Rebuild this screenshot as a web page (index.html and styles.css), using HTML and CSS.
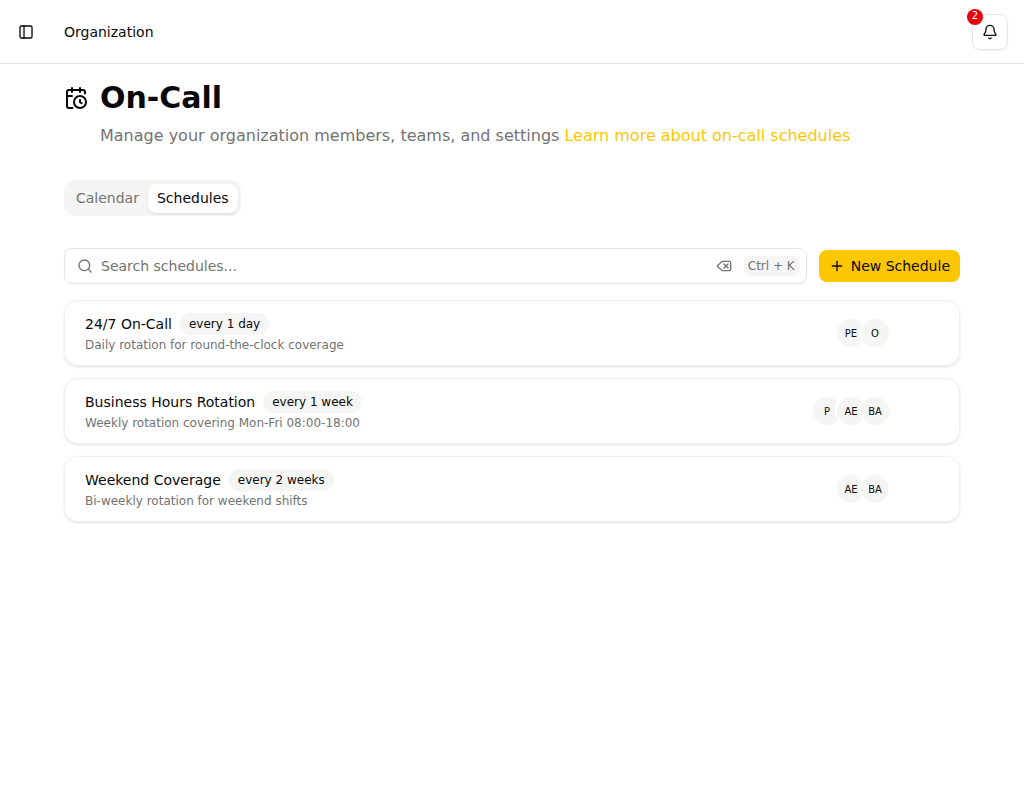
FILE: index.html
```html
<!DOCTYPE html>
<html lang="en">
<head>
    <meta charset="UTF-8">
    <meta name="viewport" content="width=device-width, initial-scale=1.0">
    <title>On-Call</title>
    <link rel="stylesheet" href="styles.css">
</head>
<body>
    <header class="topbar">
        <button type="button" class="sidebar-toggle" aria-label="Toggle sidebar">
            <svg class="icon" viewBox="0 0 24 24"><rect width="18" height="18" x="3" y="3" rx="2"/><path d="M9 3v18"/></svg>
        </button>
        <span class="breadcrumb">Organization</span>
        <button type="button" class="bell-button" aria-label="Notifications">
            <svg class="icon" viewBox="0 0 24 24"><path d="M10.268 21a2 2 0 0 0 3.464 0"/><path d="M3.262 15.326A1 1 0 0 0 4 17h16a1 1 0 0 0 .74-1.673C19.41 13.956 18 12.499 18 8A6 6 0 0 0 6 8c0 4.499-1.411 5.956-2.738 7.326"/></svg>
            <span class="bell-count">2</span>
        </button>
    </header>

    <main class="page">
        <div class="page-heading">
            <svg class="icon icon-large" viewBox="0 0 24 24"><path d="M16 14v2.2l1.6 1"/><path d="M16 2v4"/><path d="M21 7.5V6a2 2 0 0 0-2-2H5a2 2 0 0 0-2 2v14a2 2 0 0 0 2 2h3.5"/><path d="M3 10h5"/><path d="M8 2v4"/><circle cx="16" cy="16" r="6"/></svg>
            <h1>On-Call</h1>
        </div>
        <p class="page-subtitle">Manage your organization members, teams, and settings <a href="#">Learn more about on-call schedules</a></p>

        <div class="tabs" role="tablist">
            <button type="button" class="tab" role="tab" aria-selected="false">Calendar</button>
            <button type="button" class="tab active" role="tab" aria-selected="true">Schedules</button>
        </div>

        <div class="toolbar">
            <div class="search">
                <svg class="icon" viewBox="0 0 24 24"><path d="m21 21-4.34-4.34"/><circle cx="11" cy="11" r="8"/></svg>
                <input type="text" placeholder="Search schedules..." aria-label="Search schedules">
                <button type="button" class="search-clear" aria-label="Clear search">
                    <svg class="icon" viewBox="0 0 24 24"><path d="M10 5a2 2 0 0 0-1.344.519l-6.328 5.74a1 1 0 0 0 0 1.481l6.328 5.741A2 2 0 0 0 10 19h10a2 2 0 0 0 2-2V7a2 2 0 0 0-2-2z"/><path d="m12 9 6 6"/><path d="m18 9-6 6"/></svg>
                </button>
                <kbd>Ctrl + K</kbd>
            </div>
            <button type="button" class="new-button">
                <svg class="icon" viewBox="0 0 24 24"><path d="M5 12h14"/><path d="M12 5v14"/></svg>
                New Schedule
            </button>
        </div>

        <div class="schedules">
            <div class="schedule">
                <div class="schedule-info">
                    <div class="schedule-title">
                        <span>24/7 On-Call</span>
                        <span class="badge">every 1 day</span>
                    </div>
                    <p>Daily rotation for round-the-clock coverage</p>
                </div>
                <div class="avatars">
                    <span class="avatar">PE</span>
                    <span class="avatar">O</span>
                </div>
            </div>
            <div class="schedule">
                <div class="schedule-info">
                    <div class="schedule-title">
                        <span>Business Hours Rotation</span>
                        <span class="badge">every 1 week</span>
                    </div>
                    <p>Weekly rotation covering Mon-Fri 08:00-18:00</p>
                </div>
                <div class="avatars">
                    <span class="avatar">P</span>
                    <span class="avatar">AE</span>
                    <span class="avatar">BA</span>
                </div>
            </div>
            <div class="schedule">
                <div class="schedule-info">
                    <div class="schedule-title">
                        <span>Weekend Coverage</span>
                        <span class="badge">every 2 weeks</span>
                    </div>
                    <p>Bi-weekly rotation for weekend shifts</p>
                </div>
                <div class="avatars">
                    <span class="avatar">AE</span>
                    <span class="avatar">BA</span>
                </div>
            </div>
        </div>
    </main>
</body>
</html>
```
FILE: styles.css
```css
* {
    box-sizing: border-box;
    margin: 0;
    padding: 0;
}

body {
    font-family: 'DejaVu Sans', sans-serif;
    font-size: 14px;
    line-height: 20px;
    background-color: #ffffff;
    color: #09090b;
}

button, input, kbd {
    font: inherit;
    color: inherit;
}

button {
    border: none;
    background: none;
    cursor: pointer;
}

.icon {
    width: 16px;
    height: 16px;
    flex-shrink: 0;
    fill: none;
    stroke: currentColor;
    stroke-width: 2;
    stroke-linecap: round;
    stroke-linejoin: round;
}

.icon-large {
    width: 24px;
    height: 24px;
}

/* Top bar */
.topbar {
    display: flex;
    align-items: center;
    height: 64px;
    padding: 0 16px 0 12px;
    border-bottom: 1px solid #e5e5e5;
}

.sidebar-toggle {
    display: flex;
    align-items: center;
    justify-content: center;
    width: 28px;
    height: 28px;
    margin-right: 24px;
}

.bell-button {
    position: relative;
    display: flex;
    align-items: center;
    justify-content: center;
    width: 36px;
    height: 36px;
    margin-left: auto;
    border: 1px solid #e5e5e5;
    border-radius: 8px;
    box-shadow: 0 1px 2px rgba(0, 0, 0, 0.05);
}

.bell-count {
    position: absolute;
    top: -6px;
    left: -6px;
    width: 16px;
    height: 16px;
    border-radius: 50%;
    background-color: #e7000b;
    color: #ffffff;
    font-size: 10px;
    line-height: 14px;
    text-align: center;
}

/* Page */
.page {
    padding: 16px 64px;
}

.page-heading {
    display: flex;
    align-items: center;
    gap: 12px;
}

.page-heading h1 {
    font-size: 30px;
    line-height: 36px;
}

.page-subtitle {
    margin: 8px 0 32px 36px;
    font-size: 16px;
    line-height: 24px;
    color: #737373;
}

.page-subtitle a {
    color: #fdc700;
    text-decoration: none;
}

.tabs {
    display: inline-flex;
    align-items: center;
    height: 36px;
    padding: 3px;
    border-radius: 10px;
    background-color: #f5f5f4;
    vertical-align: top;
}

.tab {
    padding: 4px 9px 5px;
    border-radius: 8px;
    color: #737373;
}

.tab.active {
    background-color: #ffffff;
    color: #09090b;
    box-shadow: 0 1px 3px rgba(0, 0, 0, 0.1), 0 1px 2px -1px rgba(0, 0, 0, 0.1);
}

.toolbar {
    display: flex;
    align-items: center;
    gap: 12px;
    margin: 32px 0 16px;
}

.search {
    display: flex;
    flex: 1;
    align-items: center;
    gap: 8px;
    height: 36px;
    padding: 0 7px 0 12px;
    border: 1px solid #e5e5e5;
    border-radius: 8px;
    color: #737373;
    box-shadow: 0 1px 2px rgba(0, 0, 0, 0.05);
}

.search input {
    flex: 1;
    min-width: 0;
    border: none;
    outline: none;
    background: none;
    color: #09090b;
}

.search input::placeholder {
    color: #737373;
    opacity: 1;
}

.search-clear {
    display: flex;
    margin-right: 4px;
}

.search kbd {
    padding: 0 4px;
    border-radius: 6px;
    background-color: #f5f5f4;
    font-size: 12px;
}

.new-button {
    display: flex;
    align-items: center;
    gap: 6px;
    height: 32px;
    padding: 0 10px;
    border-radius: 8px;
    background-color: #fdc700;
}

/* Schedule list */
.schedules {
    display: flex;
    flex-direction: column;
    gap: 12px;
}

.schedule {
    display: flex;
    align-items: center;
    justify-content: space-between;
    padding: 12px 68px 12px 20px;
    border: 1px solid #f0f0f0;
    border-radius: 14px;
    box-shadow: 0 1px 3px rgba(0, 0, 0, 0.1), 0 1px 2px -1px rgba(0, 0, 0, 0.1);
}

.schedule-title {
    display: flex;
    align-items: center;
    gap: 8px;
    margin-bottom: 2px;
}

.schedule-info p {
    font-size: 12px;
    line-height: 16px;
    color: #737373;
}

.badge {
    padding: 3px 9px;
    border-radius: 11px;
    background-color: #f5f5f4;
    font-size: 12px;
    line-height: 16px;
}

.avatars {
    display: flex;
}

.avatar {
    display: flex;
    align-items: center;
    justify-content: center;
    width: 32px;
    height: 32px;
    border: 2px solid #ffffff;
    border-radius: 50%;
    background-color: #f5f5f4;
    font-size: 10px;
    line-height: 15px;
}

.avatar + .avatar {
    margin-left: -8px;
}
```
